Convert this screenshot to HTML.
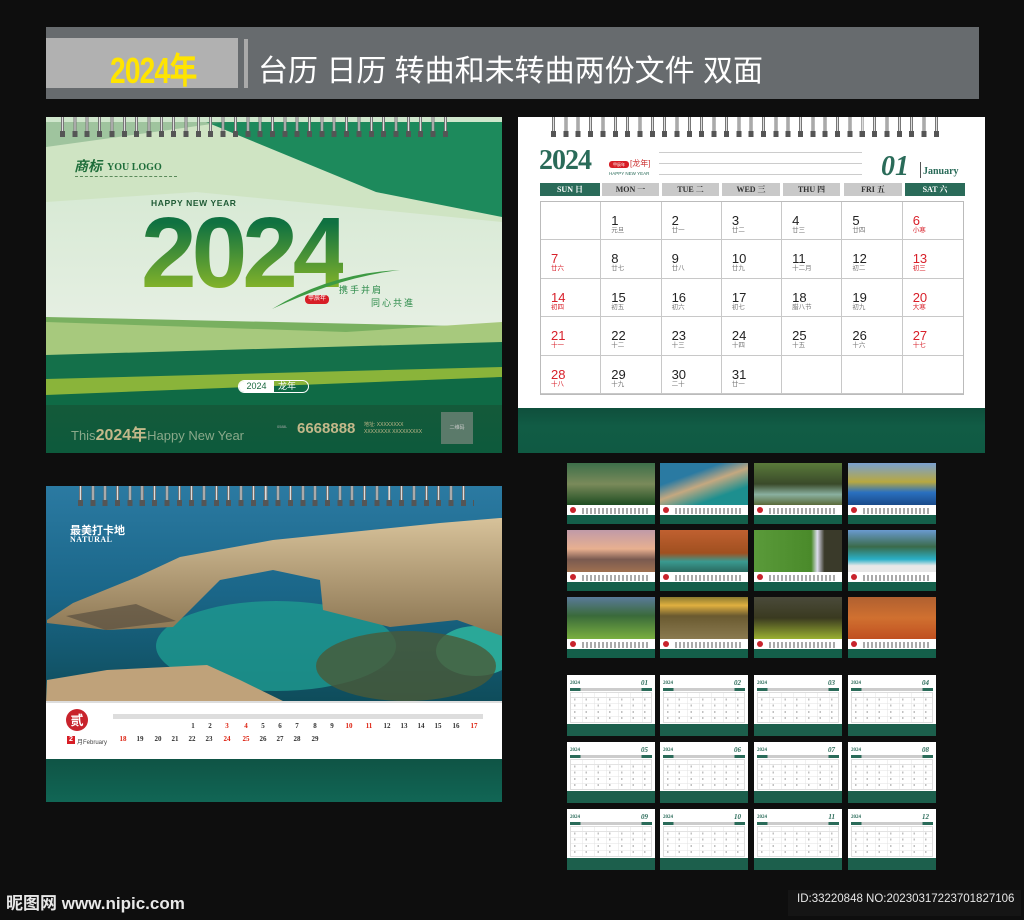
<!DOCTYPE html>
<html><head><meta charset="utf-8">
<style>
*{margin:0;padding:0;box-sizing:border-box}
body{width:1024px;height:920px;background:#0e0e0e;position:relative;overflow:hidden;font-family:"Liberation Sans","Noto Sans CJK SC",sans-serif}
.a{position:absolute}
.spiral{position:absolute;height:20px;background:repeating-linear-gradient(90deg,transparent 0 3px,#777 3px 4px,#ddd 4px 5px,#777 5px 6px,transparent 6px 12.35px)}
.spiral::after{content:"";position:absolute;left:0;right:0;bottom:0;height:6px;background:repeating-linear-gradient(90deg,transparent 0 2px,#555 2px 7px,transparent 7px 12.35px)}
.grid{position:absolute;left:540px;top:201px;width:424px;height:194px;border:1px solid #bbb;display:grid;grid-template-columns:repeat(7,1fr);grid-template-rows:repeat(5,1fr)}
.grid div{border-right:1px solid #c8c8c8;border-bottom:1px solid #c8c8c8;padding:13px 0 0 10px;font-size:13px;line-height:12px;color:#222}
.grid div:nth-child(7n){border-right:none}
.grid div i{display:block;font-style:normal;font-size:6.5px;line-height:8px;color:#777}
.grid .r{color:#d8202a}.grid .r i{color:#d8202a}
.hd{position:absolute;top:183px;height:13px;font:bold 8px "Liberation Serif","Noto Serif CJK SC",serif;text-align:center;line-height:13px;color:#333;background:#c9c9c9}
.hd.g{background:#2a6b59;color:#fff}
.tp{position:absolute;width:88px;height:61px;background:#fff;overflow:hidden}
.tp .ph{position:absolute;left:0;top:0;width:88px;height:42px}
.tp .ln{position:absolute;left:15px;top:45px;width:68px;height:6px;background:repeating-linear-gradient(90deg,#aaa 0 2px,transparent 2px 4px)}
.tp .rd{position:absolute;left:3px;top:44px;width:6px;height:6px;border-radius:50%;background:#c8232c}
.tp .gn{position:absolute;left:0;bottom:0;width:88px;height:9px;background:#145f4a}
.tc{position:absolute;width:88px;height:61px;background:#fff;overflow:hidden}
.tc .t{position:absolute;left:3px;top:6px;font:bold 5px "Liberation Serif",serif;color:#2a6b59}
.tc .m{position:absolute;right:7px;top:4px;font:italic bold 7px "Liberation Serif",serif;color:#2a6b59}
.tc .h{position:absolute;left:3px;top:13px;width:82px;height:3px;background:linear-gradient(90deg,#2a6b59 0 13%,#ccc 13% 87%,#2a6b59 87%)}
.tc .g{position:absolute;left:3px;top:17px;width:82px;height:31px;border:1px solid #ddd;background:repeating-linear-gradient(90deg,transparent 0 11.4px,#e3e3e3 11.4px 12px),repeating-linear-gradient(0deg,transparent 0 5.6px,#e3e3e3 5.6px 6.2px)}
.tc .g::after{content:"";position:absolute;left:3px;top:1px;right:2px;bottom:1px;background:repeating-linear-gradient(90deg,#999 0 1.5px,transparent 1.5px 11.7px);-webkit-mask:repeating-linear-gradient(0deg,transparent 0 2px,#000 2px 4px,transparent 4px 6.2px);opacity:.6}
.tc .gn{position:absolute;left:0;bottom:0;width:88px;height:12px;background:#1c5f4c}
.d{position:absolute;font:bold 7px 'Liberation Serif',serif;color:#333;width:14px;text-align:center}
.d.r{color:#d21}
</style></head><body>

<div class="a" style="left:46px;top:27px;width:933px;height:72px;background:#676b6e"></div>
<div class="a" style="left:46px;top:38px;width:192px;height:50px;background:#b1b1b1"></div>
<div class="a" style="left:244px;top:39px;width:4px;height:49px;background:#aaa"></div>
<div class="a" style="left:110px;top:42px;font:bold 36px 'Liberation Sans','Noto Sans CJK SC',sans-serif;color:#ffe400;letter-spacing:-1px;transform:scaleX(.78);transform-origin:left;white-space:nowrap">2024年</div>
<div class="a" style="left:258px;top:54px;font-size:30px;color:#fff;line-height:36px;white-space:nowrap">台历 日历 转曲和未转曲两份文件 双面</div>

<div class="a" style="left:46px;top:117px;width:456px;height:336px;overflow:hidden;background:linear-gradient(180deg,#cfe6cc 0,#e5efe2 60%,#f3f6f1 100%)">
  <svg class="a" style="left:0;top:0" width="456" height="290" viewBox="0 0 456 290">
    <polygon points="0,5 456,5 456,105 150,75 0,85" fill="#cfe4c3"/>
    <polygon points="160,5 456,5 456,100 330,75" fill="#1d8a5c"/>
    <polygon points="0,5 180,5 0,30" fill="#6fa37a" opacity=".5"/>
    <polygon points="0,200 456,210 456,290 0,290" fill="#79b060"/>
    <polygon points="0,205 300,215 456,205 456,230 0,240" fill="#a7c97d"/>
    <polygon points="0,238 456,225 456,290 0,290" fill="#14704a"/>
    <polygon points="0,262 456,250 456,260 0,290" fill="#8ab43a"/>
    <polygon points="0,278 456,260 456,290 0,290" fill="#0f6a45"/>
  </svg>
  <div class="a" style="left:0;top:288px;width:456px;height:48px;background:linear-gradient(180deg,#145a3a,#0d5a3c)"></div>
</div>
<div class="spiral" style="left:58px;top:117px;width:395px"></div>
<div class="a" style="left:74px;top:156px;font:italic bold 14px 'Noto Sans CJK SC',sans-serif;color:#1e6d3a">商标</div>
<div class="a" style="left:107px;top:162px;font:bold 10px 'Liberation Serif',serif;color:#1e6d3a">YOU LOGO</div>
<div class="a" style="left:75px;top:176px;width:102px;border-top:1px dashed #5a8a5a"></div>
<div class="a" style="left:151px;top:198px;font:bold 8.5px 'Liberation Sans',sans-serif;color:#1f5a35;letter-spacing:.6px">HAPPY NEW YEAR</div>
<div class="a" style="left:141px;top:203px;font:bold 100px/100px 'Liberation Sans',sans-serif;letter-spacing:-5px;background:linear-gradient(180deg,#0f7141 20%,#82b22a 85%);-webkit-background-clip:text;color:transparent">2024</div>
<svg class="a" style="left:270px;top:265px" width="140" height="50"><path d="M2 44 Q60 8 130 5 Q70 12 2 44Z" fill="#3d9a43"/></svg>
<div class="a" style="left:305px;top:295px;width:24px;height:9px;border-radius:4px;background:#d71e26;color:#fff;font-size:6px;line-height:9px;text-align:center">甲辰年</div>
<div class="a" style="left:339px;top:283px;font-size:9px;color:#2a8a48;letter-spacing:2px">携手并肩</div>
<div class="a" style="left:371px;top:296px;font-size:9px;color:#2a8a48;letter-spacing:2px">同心共進</div>
<div class="a" style="left:238px;top:380px;width:71px;height:13px;border:1px solid #fff;border-radius:7px;overflow:hidden;font-size:9px;line-height:11px;color:#fff"><span style="display:inline-block;width:35px;background:#fff;color:#1b6a40;text-align:center">2024</span><span style="padding-left:4px">龙年</span></div>
<div class="a" style="left:71px;top:421px;font-size:13px;color:#8aa98a;white-space:nowrap">This<b style="color:#c3b88a;font-size:16px">2024年</b>Happy New Year</div>
<div class="a" style="left:277px;top:424px;font-size:4px;color:#aaa">0588-</div>
<div class="a" style="left:297px;top:420px;font:bold 15px 'Liberation Sans',sans-serif;color:#c3b88a">6668888</div>
<div class="a" style="left:364px;top:422px;font-size:5px;color:#c3b88a;line-height:7px">地址: XXXXXXXX<br>XXXXXXXX XXXXXXXXX</div>
<div class="a" style="left:441px;top:412px;width:32px;height:32px;background:#5b7a6a;color:#ccc;font-size:5px;line-height:32px;text-align:center">二维码</div>

<div class="a" style="left:518px;top:117px;width:467px;height:291px;background:#fff"></div>
<div class="a" style="left:518px;top:408px;width:467px;height:45px;background:linear-gradient(180deg,#0f4f3c,#115c45 40%,#105a43)"></div>
<div class="spiral" style="left:549px;top:117px;width:397px"></div>
<div class="a" style="left:539px;top:145px;font:bold 28px 'Liberation Serif',serif;color:#2a6b59;letter-spacing:-1px">2024</div>
<div class="a" style="left:609px;top:161px;width:20px;height:7px;border-radius:3px;background:#d71e26;color:#fff;font-size:4px;line-height:7px;text-align:center">甲辰年</div>
<div class="a" style="left:630px;top:158px;font-size:8px;color:#c33">[龙年]</div>
<div class="a" style="left:609px;top:171px;font-size:4.5px;color:#2a6b59">HAPPY NEW YEAR</div>
<div class="a" style="left:659px;top:152px;width:203px;height:1px;background:#ccc"></div>
<div class="a" style="left:659px;top:163px;width:203px;height:1px;background:#ccc"></div>
<div class="a" style="left:659px;top:174px;width:203px;height:1px;background:#ccc"></div>
<div class="a" style="left:881px;top:151px;font:italic bold 28px 'Liberation Serif',serif;color:#2a6b59">01</div>
<div class="a" style="left:920px;top:162px;width:1px;height:16px;background:#555"></div>
<div class="a" style="left:923px;top:166px;font:bold 10px 'Liberation Serif',serif;color:#2a6b59">January</div>
<div class="hd g" style="left:540px;width:60px">SUN 日</div>
<div class="hd" style="left:602px;width:57px">MON 一</div>
<div class="hd" style="left:662px;width:57px">TUE 二</div>
<div class="hd" style="left:722px;width:58px">WED 三</div>
<div class="hd" style="left:783px;width:57px">THU 四</div>
<div class="hd" style="left:844px;width:58px">FRI 五</div>
<div class="hd g" style="left:905px;width:60px">SAT 六</div>
<div class="grid">
<div></div><div>1<i>元旦</i></div><div>2<i>廿一</i></div><div>3<i>廿二</i></div><div>4<i>廿三</i></div><div>5<i>廿四</i></div><div class="r">6<i>小寒</i></div>
<div class="r">7<i>廿六</i></div><div>8<i>廿七</i></div><div>9<i>廿八</i></div><div>10<i>廿九</i></div><div>11<i>十二月</i></div><div>12<i>初二</i></div><div class="r">13<i>初三</i></div>
<div class="r">14<i>初四</i></div><div>15<i>初五</i></div><div>16<i>初六</i></div><div>17<i>初七</i></div><div>18<i>腊八节</i></div><div>19<i>初九</i></div><div class="r">20<i>大寒</i></div>
<div class="r">21<i>十一</i></div><div>22<i>十二</i></div><div>23<i>十三</i></div><div>24<i>十四</i></div><div>25<i>十五</i></div><div>26<i>十六</i></div><div class="r">27<i>十七</i></div>
<div class="r">28<i>十八</i></div><div>29<i>十九</i></div><div>30<i>二十</i></div><div>31<i>廿一</i></div><div></div><div></div><div></div>
</div>

<div class="a" style="left:46px;top:486px;width:456px;height:316px;background:#fff;overflow:hidden">
  <svg class="a" style="left:0;top:0" width="456" height="217" viewBox="0 0 456 217">
    <defs>
      <linearGradient id="sea" x1="0" y1="0" x2="0" y2="1"><stop offset="0" stop-color="#2b7aa2"/><stop offset=".5" stop-color="#1a6688"/><stop offset="1" stop-color="#0e4c5a"/></linearGradient>
      <linearGradient id="rk" x1="0" y1="0" x2="0" y2="1"><stop offset="0" stop-color="#d7c29a"/><stop offset="1" stop-color="#8a7451"/></linearGradient>
    </defs>
    <rect width="456" height="217" fill="url(#sea)"/>
    <ellipse cx="230" cy="160" rx="120" ry="45" fill="#1e9a90" opacity=".8"/>
    <ellipse cx="430" cy="165" rx="40" ry="25" fill="#2aa898"/>
    <ellipse cx="360" cy="180" rx="90" ry="35" fill="#4a5a38" opacity=".8"/>
    <polygon points="1,134 27,117 91,91 134,71 227,54 394,37 454,32 456,32 456,150 411,134 344,141 277,124 274,94 227,84 174,94 154,114 127,141 61,144 1,137" fill="url(#rk)"/>
    <polygon points="20,130 90,118 130,135 60,144" fill="#5a5040" opacity=".7"/>
    <polygon points="1,194 61,184 161,179 194,194 241,217 0,217" fill="#bfa27a"/>
  </svg>
  <div class="a" style="left:0;top:215px;width:456px;height:2px;background:#ddd"></div>
  <div class="a" style="left:0;top:273px;width:456px;height:43px;background:linear-gradient(180deg,#0f5445,#116655)"></div>
</div>
<div class="spiral" style="left:76px;top:486px;width:398px"></div>
<div class="a" style="left:70px;top:522px;font:bold 11px 'Noto Sans CJK SC',sans-serif;color:#fff">最美打卡地</div>
<div class="a" style="left:70px;top:535px;font:bold 8px 'Liberation Serif',serif;color:#fff;letter-spacing:.5px">NATURAL</div>
<div class="a" style="left:66px;top:709px;width:22px;height:22px;border-radius:50%;background:#c8232c;color:#fff;font:bold 13px/22px 'Noto Sans CJK SC',sans-serif;text-align:center">贰</div>
<div class="a" style="left:67px;top:736px;width:8px;height:8px;background:#d71e26;color:#fff;font:bold 7px/8px sans-serif;text-align:center">2</div>
<div class="a" style="left:77px;top:737px;font-size:6px;color:#444">月February</div>
<div class="a" style="left:113px;top:714px;width:370px;height:5px;background:#ddd"></div>
<div class="d" style="left:186px;top:722px">1</div><div class="d" style="left:203px;top:722px">2</div><div class="d r" style="left:220px;top:722px">3</div><div class="d r" style="left:239px;top:722px">4</div><div class="d" style="left:256px;top:722px">5</div><div class="d" style="left:273px;top:722px">6</div><div class="d" style="left:290px;top:722px">7</div><div class="d" style="left:308px;top:722px">8</div><div class="d" style="left:325px;top:722px">9</div><div class="d r" style="left:342px;top:722px">10</div><div class="d r" style="left:362px;top:722px">11</div><div class="d" style="left:380px;top:722px">12</div><div class="d" style="left:397px;top:722px">13</div><div class="d" style="left:414px;top:722px">14</div><div class="d" style="left:431px;top:722px">15</div><div class="d" style="left:449px;top:722px">16</div><div class="d r" style="left:467px;top:722px">17</div>
<div class="d r" style="left:116px;top:735px">18</div><div class="d" style="left:133px;top:735px">19</div><div class="d" style="left:151px;top:735px">20</div><div class="d" style="left:168px;top:735px">21</div><div class="d" style="left:185px;top:735px">22</div><div class="d" style="left:202px;top:735px">23</div><div class="d r" style="left:220px;top:735px">24</div><div class="d r" style="left:239px;top:735px">25</div><div class="d" style="left:256px;top:735px">26</div><div class="d" style="left:273px;top:735px">27</div><div class="d" style="left:290px;top:735px">28</div><div class="d" style="left:308px;top:735px">29</div>

<div class="tp" style="left:567px;top:463px"><div class="ph" style="background:linear-gradient(180deg,#3d6f4a,#7a8a5a 50%,#1f4d22)"></div><div class="rd"></div><div class="ln"></div><div class="gn"></div></div>
<div class="tp" style="left:660px;top:463px"><div class="ph" style="background:linear-gradient(160deg,#2a7aa2 30%,#c4a880 50%,#1d8f8f 75%)"></div><div class="rd"></div><div class="ln"></div><div class="gn"></div></div>
<div class="tp" style="left:754px;top:463px"><div class="ph" style="background:linear-gradient(180deg,#5a7a3a,#3a4a2a 50%,#8ab0a0 75%,#5a6a3a)"></div><div class="rd"></div><div class="ln"></div><div class="gn"></div></div>
<div class="tp" style="left:848px;top:463px"><div class="ph" style="background:linear-gradient(180deg,#7aa0d0,#b8a840 45%,#2a70c0 70%,#1a4a8a)"></div><div class="rd"></div><div class="ln"></div><div class="gn"></div></div>
<div class="tp" style="left:567px;top:530px"><div class="ph" style="background:linear-gradient(180deg,#c09aa8,#e8b090 45%,#7a5a50 70%,#a07050)"></div><div class="rd"></div><div class="ln"></div><div class="gn"></div></div>
<div class="tp" style="left:660px;top:530px"><div class="ph" style="background:linear-gradient(180deg,#c06030,#a05020 55%,#3a9a90 75%,#2a6a60)"></div><div class="rd"></div><div class="ln"></div><div class="gn"></div></div>
<div class="tp" style="left:754px;top:530px"><div class="ph" style="background:linear-gradient(90deg,#5a9a3a,#4a8a2a 65%,#dde 72%,#3a3a2a 80%)"></div><div class="rd"></div><div class="ln"></div><div class="gn"></div></div>
<div class="tp" style="left:848px;top:530px"><div class="ph" style="background:linear-gradient(180deg,#6a9ad0,#3a6a4a 40%,#2ab0c8 70%,#e8e8e8 85%)"></div><div class="rd"></div><div class="ln"></div><div class="gn"></div></div>
<div class="tp" style="left:567px;top:597px"><div class="ph" style="background:linear-gradient(180deg,#5a7a9a,#3a6a3a 45%,#7ab040)"></div><div class="rd"></div><div class="ln"></div><div class="gn"></div></div>
<div class="tp" style="left:660px;top:597px"><div class="ph" style="background:linear-gradient(180deg,#8a7a30,#e0b040 20%,#6a5a30 45%,#8a7a50)"></div><div class="rd"></div><div class="ln"></div><div class="gn"></div></div>
<div class="tp" style="left:754px;top:597px"><div class="ph" style="background:linear-gradient(180deg,#4a4a3a,#3a3a20 50%,#9ab030)"></div><div class="rd"></div><div class="ln"></div><div class="gn"></div></div>
<div class="tp" style="left:848px;top:597px"><div class="ph" style="background:linear-gradient(180deg,#b06030,#d07030 50%,#c05020)"></div><div class="rd"></div><div class="ln"></div><div class="gn"></div></div>

<div class="tc" style="left:567px;top:675px"><div class="t">2024</div><div class="m">01</div><div class="h"></div><div class="g"></div><div class="gn"></div></div>
<div class="tc" style="left:660px;top:675px"><div class="t">2024</div><div class="m">02</div><div class="h"></div><div class="g"></div><div class="gn"></div></div>
<div class="tc" style="left:754px;top:675px"><div class="t">2024</div><div class="m">03</div><div class="h"></div><div class="g"></div><div class="gn"></div></div>
<div class="tc" style="left:848px;top:675px"><div class="t">2024</div><div class="m">04</div><div class="h"></div><div class="g"></div><div class="gn"></div></div>
<div class="tc" style="left:567px;top:742px"><div class="t">2024</div><div class="m">05</div><div class="h"></div><div class="g"></div><div class="gn"></div></div>
<div class="tc" style="left:660px;top:742px"><div class="t">2024</div><div class="m">06</div><div class="h"></div><div class="g"></div><div class="gn"></div></div>
<div class="tc" style="left:754px;top:742px"><div class="t">2024</div><div class="m">07</div><div class="h"></div><div class="g"></div><div class="gn"></div></div>
<div class="tc" style="left:848px;top:742px"><div class="t">2024</div><div class="m">08</div><div class="h"></div><div class="g"></div><div class="gn"></div></div>
<div class="tc" style="left:567px;top:809px"><div class="t">2024</div><div class="m">09</div><div class="h"></div><div class="g"></div><div class="gn"></div></div>
<div class="tc" style="left:660px;top:809px"><div class="t">2024</div><div class="m">10</div><div class="h"></div><div class="g"></div><div class="gn"></div></div>
<div class="tc" style="left:754px;top:809px"><div class="t">2024</div><div class="m">11</div><div class="h"></div><div class="g"></div><div class="gn"></div></div>
<div class="tc" style="left:848px;top:809px"><div class="t">2024</div><div class="m">12</div><div class="h"></div><div class="g"></div><div class="gn"></div></div>

<div class="a" style="left:6px;top:889px;font:bold 17px 'Liberation Sans','Noto Sans CJK SC',sans-serif;color:#e8e8e8">昵图网 www.nipic.com</div>
<div class="a" style="left:788px;top:890px;height:26px;background:#151515;width:233px"></div>
<div class="a" style="left:797px;top:893px;font-size:11.5px;color:#e8e8e8;white-space:nowrap">ID:33220848 NO:20230317223701827106</div>
</body></html>
